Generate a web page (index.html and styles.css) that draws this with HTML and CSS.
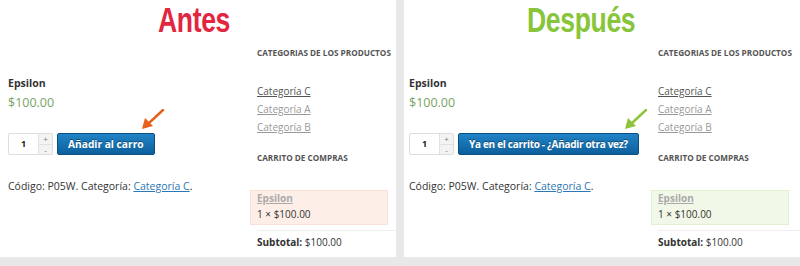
FILE: index.html
```html
<!DOCTYPE html>
<html lang="es">
<head>
  <meta charset="UTF-8">
  <title>Antes / Después</title>
  <link rel="stylesheet" href="styles.css">
</head>
<body>

  <div class="compare">

    <!-- Antes -->
    <section class="panel panel-before">
      <h1 class="title title-before"><span class="title-text">Antes</span></h1>
      <div class="shop">
        <div class="product">
          <h2 class="product-name">Epsilon</h2>
          <p class="price">$100.00</p>
          <form class="cart-form">
            <div class="qty">
              <span class="qty-value">1</span>
              <span class="qty-spin"><span>+</span><span>-</span></span>
            </div>
            <button type="button" class="add-btn">Añadir al carro</button>
          </form>
          <p class="meta">Código: P05W. Categoría: <a href="#">Categoría C</a>.</p>
        </div>
        <aside class="sidebar">
          <h3 class="widget-title">Categorias de los productos</h3>
          <ul class="cat-list">
            <li><a href="#" class="current">Categoría C</a></li>
            <li><a href="#">Categoría A</a></li>
            <li><a href="#">Categoría B</a></li>
          </ul>
          <h3 class="widget-title widget-cart">Carrito de compras</h3>
          <div class="mini-cart mini-cart-before">
            <a href="#" class="mini-name">Epsilon</a>
            <div class="mini-qty">1 × $100.00</div>
          </div>
          <p class="subtotal"><strong>Subtotal:</strong> $100.00</p>
        </aside>
      </div>
      <svg class="arrow arrow-before" width="24" height="22" viewBox="0 0 24 22">
        <line x1="22" y1="1" x2="8" y2="14" stroke="#e8611c" stroke-width="2.4" stroke-linecap="round"/>
        <polygon points="1,20 4,9 12,17" fill="#e8611c"/>
      </svg>
    </section>

    <!-- Después -->
    <section class="panel panel-after">
      <h1 class="title title-after"><span class="title-text">Después</span></h1>
      <div class="shop">
        <div class="product">
          <h2 class="product-name">Epsilon</h2>
          <p class="price">$100.00</p>
          <form class="cart-form">
            <div class="qty">
              <span class="qty-value">1</span>
              <span class="qty-spin"><span>+</span><span>-</span></span>
            </div>
            <button type="button" class="add-btn add-btn-again">Ya en el carrito - ¿Añadir otra vez?</button>
          </form>
          <p class="meta">Código: P05W. Categoría: <a href="#">Categoría C</a>.</p>
        </div>
        <aside class="sidebar">
          <h3 class="widget-title">Categorias de los productos</h3>
          <ul class="cat-list">
            <li><a href="#" class="current">Categoría C</a></li>
            <li><a href="#">Categoría A</a></li>
            <li><a href="#">Categoría B</a></li>
          </ul>
          <h3 class="widget-title widget-cart">Carrito de compras</h3>
          <div class="mini-cart mini-cart-after">
            <a href="#" class="mini-name">Epsilon</a>
            <div class="mini-qty">1 × $100.00</div>
          </div>
          <p class="subtotal"><strong>Subtotal:</strong> $100.00</p>
        </aside>
      </div>
      <svg class="arrow arrow-after" width="24" height="22" viewBox="0 0 24 22">
        <line x1="22" y1="1" x2="8" y2="14" stroke="#8cc43c" stroke-width="2.4" stroke-linecap="round"/>
        <polygon points="1,20 4,9 12,17" fill="#8cc43c"/>
      </svg>
    </section>

  </div>

</body>
</html>
```

FILE: styles.css
```css
* {
  box-sizing: border-box;
}

body {
  margin: 0;
  background: #e8e8e8;
  font-family: 'Open Sans', 'Liberation Sans', sans-serif;
  color: #333;
}

.compare {
  display: grid;
  grid-template-columns: 396px 396px;
  gap: 8px;
  height: 266px;
}

.panel {
  position: relative;
  background: #fff;
  height: 257px;
  padding-left: 8px;
}

.panel-after {
  padding-left: 5px;
}

/* titles */
.title {
  margin: 0;
  height: 40px;
  font-family: 'Liberation Sans', 'DejaVu Sans', sans-serif;
  font-weight: bold;
  font-size: 35px;
  line-height: 40px;
  letter-spacing: -0.5px;
  white-space: nowrap;
}

.title-text {
  display: inline-block;
  transform: scaleX(0.76);
  transform-origin: left center;
}

.title-before {
  color: #e2263f;
  padding-left: 150px;
}

.title-after {
  color: #88c53a;
  padding-left: 118px;
}

/* shop layout */
.shop {
  display: grid;
  grid-template-columns: 242px 1fr;
}

.product-name {
  margin: 35px 0 0;
  font-size: 10.5px;
  line-height: 16px;
  font-weight: bold;
  color: #333;
}

.price {
  margin: 2px 0 0;
  font-size: 12.5px;
  line-height: 20px;
  color: #77a464;
}

.cart-form {
  display: flex;
  gap: 4px;
  margin-top: 20px;
  height: 22px;
}

.qty {
  display: flex;
  width: 45px;
  height: 22px;
  border: 1px solid #ddd;
  border-radius: 2px;
  background: #fff;
}

.qty-value {
  flex: 1;
  font-size: 9px;
  font-weight: bold;
  line-height: 20px;
  text-align: center;
  color: #222;
}

.qty-spin {
  display: flex;
  flex-direction: column;
  width: 14px;
  border-left: 1px solid #e2e2e2;
  background: #f3f3f3;
}

.qty-spin span {
  flex: 1;
  font-size: 8px;
  line-height: 10px;
  text-align: center;
  color: #777;
}

.qty-spin span + span {
  border-top: 1px solid #e2e2e2;
}

.add-btn {
  height: 22px;
  padding: 0 10px;
  border: 1px solid #0a4f82;
  border-radius: 2px;
  background: linear-gradient(#2183c6, #0d5f9c);
  color: #fff;
  font-family: 'Open Sans', 'Liberation Sans', sans-serif;
  font-weight: bold;
  font-size: 10.2px;
  white-space: nowrap;
  text-shadow: 0 -1px 0 rgba(0, 0, 0, 0.4);
  cursor: pointer;
}

.add-btn-again {
  font-size: 10px;
  letter-spacing: -0.3px;
}

.meta {
  margin: 23px 0 0;
  font-size: 10.5px;
  line-height: 16px;
  color: #333;
}

.meta a {
  color: #2c77b5;
}

/* sidebar */
.sidebar {
  font-size: 10px;
}

.widget-title {
  margin: 6px 0 0;
  padding-left: 7px;
  font-size: 8.2px;
  line-height: 14px;
  font-weight: bold;
  text-transform: uppercase;
  color: #555;
}

.cat-list {
  list-style: none;
  margin: 22px 0 0;
  padding: 0 0 0 7px;
}

.cat-list li {
  line-height: 18px;
}

.cat-list a {
  color: #999;
}

.cat-list a.current {
  color: #555;
}

.widget-cart {
  margin-top: 15px;
}

.mini-cart {
  width: 138px;
  margin-top: 25px;
  padding: 0 6px 1px;
  border: 1px solid;
}

.mini-cart-before {
  background: #fdefe8;
  border-color: #f8e2d8;
}

.mini-cart-after {
  background: #f2f8e8;
  border-color: #e4f0d2;
}

.mini-name {
  display: block;
  line-height: 15px;
  font-weight: bold;
  color: #aaa;
}

.mini-qty {
  line-height: 17px;
  color: #333;
}

.subtotal {
  margin: 5px 0 0 7px;
  padding-top: 3px;
  border-top: 1px solid #eee;
  line-height: 16px;
  color: #333;
}

/* arrows drawn over the page */
.arrow {
  position: absolute;
  top: 109px;
}

.arrow-before {
  left: 141px;
}

.arrow-after {
  left: 220px;
}
```
